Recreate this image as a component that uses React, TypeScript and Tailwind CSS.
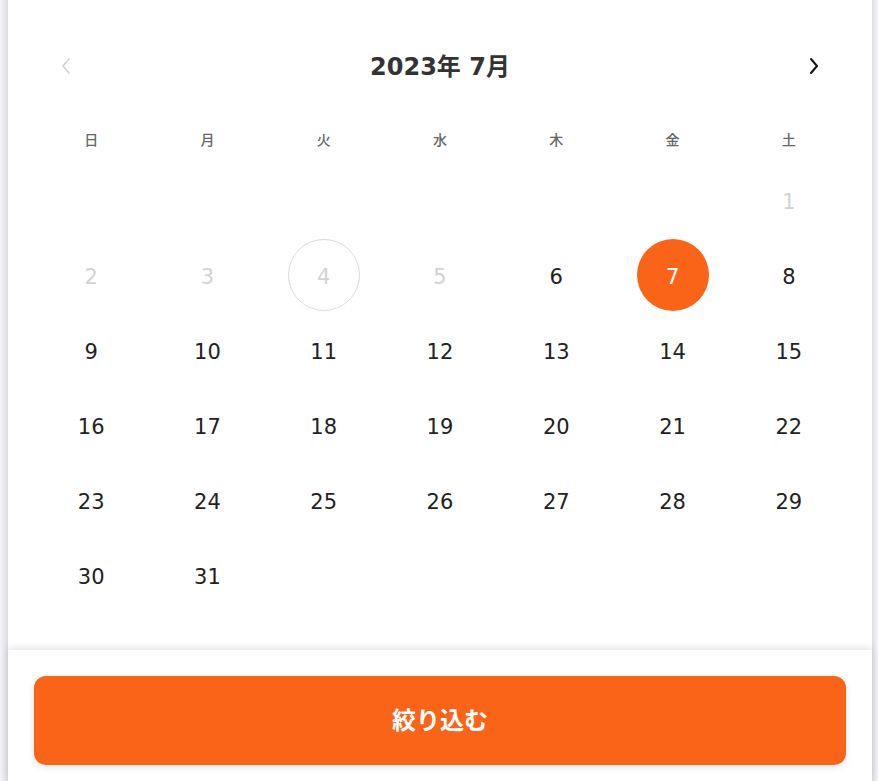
import React from 'react';

const weekdays = ['日', '月', '火', '水', '木', '金', '土'];

// July 2023 starts on Saturday
const cells: (number | null)[] = [
  null, null, null, null, null, null, 1,
  2, 3, 4, 5, 6, 7, 8,
  9, 10, 11, 12, 13, 14, 15,
  16, 17, 18, 19, 20, 21, 22,
  23, 24, 25, 26, 27, 28, 29,
  30, 31, null, null, null, null, null,
];

const today = 4;
const selected = 7;

function DayCell({ day }: { day: number | null }) {
  if (day === null) return <div className="h-[75px]" />;
  const disabled = day < 6;
  let circle = 'text-[#222]';
  if (disabled) circle = 'text-[#d2d2d2]';
  if (day === today) circle = 'text-[#d2d2d2] border border-[#dcdcdc]';
  if (day === selected) circle = 'bg-[#fa6419] text-white';
  return (
    <div className="h-[75px] flex items-center justify-center">
      <div className={`w-[72px] h-[72px] pt-[6px] rounded-full flex items-center justify-center text-[21px] ${circle}`}>
        {day}
      </div>
    </div>
  );
}

export default function App() {
  return (
    <div
      className="h-[781px] w-[878px] flex bg-white overflow-hidden"
      style={{ fontFamily: '"DejaVu Sans", "Noto Sans CJK JP", sans-serif' }}
    >
      <div className="w-[8px] bg-gradient-to-r from-[#f4f4f8] to-[#dcdce4]" />
      <div className="flex-1 flex flex-col">
        <div className="flex-1 px-[25px]">
          <div className="h-[40px] mt-[46px] flex items-center justify-between px-[27px]">
            <svg width="12" height="18" viewBox="0 0 12 18" fill="none">
              <path d="M9 2L3 9l6 7" stroke="#d4d4d4" strokeWidth="1.8" strokeLinecap="round" strokeLinejoin="round" />
            </svg>
            <div className="text-[24px] font-bold text-[#333] leading-none pt-[2px]">2023年 7月</div>
            <svg width="12" height="18" viewBox="0 0 12 18" fill="none">
              <path d="M3 2l6 7-6 7" stroke="#111" strokeWidth="2" strokeLinecap="round" strokeLinejoin="round" />
            </svg>
          </div>
          <div
            className="grid grid-cols-7 mt-[38px] h-[30px] items-center"
            style={{ fontFamily: '"Noto Sans CJK JP", sans-serif' }}
          >
            {weekdays.map((w) => (
              <div key={w} className="text-center text-[14px] font-medium text-[#666]">
                {w}
              </div>
            ))}
          </div>
          <div className="grid grid-cols-7 mt-[8px]">
            {cells.map((d, i) => (
              <DayCell key={i} day={d} />
            ))}
          </div>
        </div>
        <div className="h-[131px] bg-white shadow-[0_-3px_8px_rgba(0,0,0,0.10)] px-[26px] pt-[26px] relative">
          <button
            className="w-full h-[89px] rounded-[12px] bg-[#fa6419] text-white text-[24px] font-bold leading-none pb-[4px] shadow-[0_2px_6px_rgba(0,0,0,0.12)]"
            style={{ fontFamily: '"Noto Sans CJK JP", sans-serif' }}
          >
            絞り込む
          </button>
        </div>
      </div>
      <div className="w-[6px] bg-gradient-to-r from-[#dcdce4] to-[#f4f4f8]" />
    </div>
  );
}
